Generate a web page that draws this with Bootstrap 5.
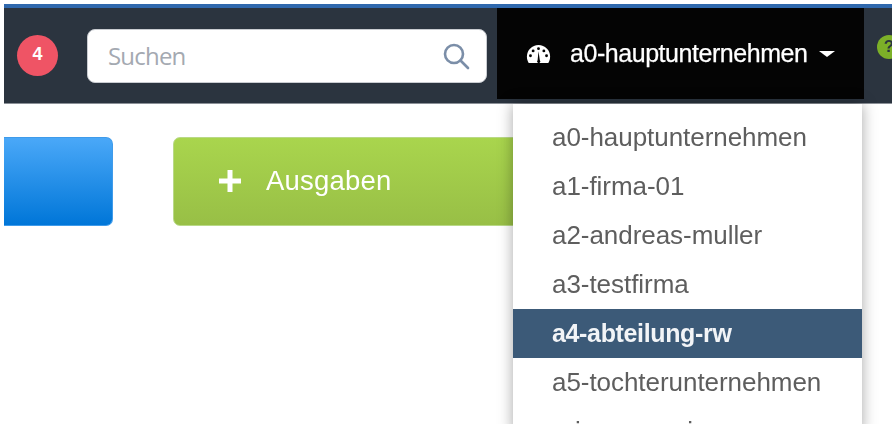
<!DOCTYPE html>
<html lang="de">
<head>
<meta charset="utf-8">
<title>Ausgaben</title>
<link href="https://cdn.jsdelivr.net/npm/bootstrap@5.3.0/dist/css/bootstrap.min.css" rel="stylesheet">
<style>
html, body { height: 428px; overflow: hidden; background: #fff; }
body { font-family: "Liberation Sans", Arial, sans-serif; }
.shot { margin: 4px 4px 4px 4px; height: 420px; overflow: hidden; position: relative; filter: blur(.55px); }
.top-rule { height: 4px; background: #2f68ad; }
.top-bar { height: 96px; background: #2b343f; border-bottom: 1px solid #8b9097; }
.alert-dot { flex: none; width: 41px; height: 41px; margin-left: 13px; padding-bottom: 3px; background: #ef5465; color: #fff; font-size: 18px; font-weight: 700; }
.find-box { flex: none; width: 400px; height: 54px; margin-left: 29px; padding: 0 16px 0 20px; background: #fff; border-radius: 8px; border: 1px solid #c9ccd1; }
.find-label { font-family: "Open Sans", sans-serif; font-size: 24px; letter-spacing: -.8px; color: #a4a9b1; }
.firm-toggle { flex: none; width: 367px; margin-left: 10px; height: 91px; align-self: flex-start; background: #040404; color: #fff; font-size: 25px; letter-spacing: -.45px; padding-left: 29px; -webkit-text-stroke: .25px #fff; }
.firm-label { margin-left: 19px; }
.firm-caret { width: 0; height: 0; margin-left: 12px; border-left: 8px solid transparent; border-right: 8px solid transparent; border-top: 6px solid #fff; }
.help-dot { width: 24px; height: 24px; margin-left: 13px; margin-top: -18px; background: #7cb028; color: #2b343f; font-size: 17px; font-weight: 700; flex: none; }
.action-row { margin-top: 33px; height: 89px; }
.tile-blue { width: 109px; border-radius: 0 7px 7px 0; background: linear-gradient(#4aa8f8, #0076d8); border: 1px solid #3f9bea; border-left: 0; }
.tile-green { width: 400px; margin-left: 60px; border-radius: 7px; background: linear-gradient(#a9d54d, #98bf46); border: 1px solid #b9d987; color: #fff; font-size: 27.5px; line-height: 1; padding-left: 44px; padding-bottom: 2px; letter-spacing: .2px; }
.tile-plus { margin-right: 24px; }
.firm-menu { position: absolute; left: 509px; top: 100px; width: 349px; height: 330px; margin: 0; padding: 0; border: 0; border-radius: 0; background: #fff; box-shadow: 0 0 14px rgba(0,0,0,.35); display: block; overflow: hidden; }
.firm-menu .firm-item { display: flex; align-items: center; height: 49px; padding: 0 0 0 39px; font-size: 26px; letter-spacing: -.05px; color: #5e5e5e; background: transparent; }
.firm-menu .firm-item.active { background: #3c5a78; color: #f2f4f7; font-weight: 700; font-size: 25px; letter-spacing: -.35px; }
.firm-menu li:first-child .firm-item { margin-top: 9px; }
</style>
</head>
<body>
<div class="shot">
  <div class="top-rule"></div>
  <nav class="top-bar d-flex align-items-center">
    <span class="alert-dot rounded-circle d-flex align-items-center justify-content-center">4</span>
    <div class="find-box d-flex align-items-center justify-content-between">
      <span class="find-label">Suchen</span>
      <svg width="28" height="28" viewBox="0 0 28 28" fill="none" stroke="#7b8ea8" stroke-width="2.6" aria-hidden="true"><circle cx="12" cy="12" r="9"/><path d="M18.500 18.500 26 26" stroke-linecap="round"/></svg>
    </div>
    <div class="firm-toggle d-flex align-items-center">
      <svg width="25" height="20" viewBox="0 0 28 22" aria-hidden="true"><path d="M14 1C6.800 1 1 6.800 1 14c0 2.600.8 5 2 7h22c1.200-2 2-4.400 2-7C27 6.800 21.200 1 14 1Z" fill="#fff"/><g fill="#040404"><circle cx="14" cy="5" r="1.600"/><circle cx="8" cy="7.500" r="1.600"/><circle cx="20" cy="7.500" r="1.600"/><circle cx="5" cy="13" r="1.600"/><circle cx="23" cy="13" r="1.600"/><path d="m13 18 1-10 1.500 10a1.800 1.800 0 1 1-2.500 0Z"/></g></svg>
      <span class="firm-label">a0-hauptunternehmen</span>
      <span class="firm-caret"></span>
    </div>
    <span class="help-dot rounded-circle d-flex align-items-center justify-content-center">?</span>
  </nav>
  <div class="action-row d-flex">
    <div class="tile-blue"></div>
    <div class="tile-green d-flex align-items-center">
      <svg class="tile-plus" width="24" height="24" viewBox="0 0 24 24" aria-hidden="true"><path d="M9.500 1h5v8.500H23v5h-8.500V23h-5v-8.500H1v-5h8.500Z" fill="#fff"/></svg>
      <span>Ausgaben</span>
    </div>
  </div>
  <ul class="dropdown-menu firm-menu list-unstyled">
    <li><a class="dropdown-item firm-item" href="#">a0-hauptunternehmen</a></li>
    <li><a class="dropdown-item firm-item" href="#">a1-firma-01</a></li>
    <li><a class="dropdown-item firm-item" href="#">a2-andreas-muller</a></li>
    <li><a class="dropdown-item firm-item" href="#">a3-testfirma</a></li>
    <li><a class="dropdown-item firm-item active" href="#">a4-abteilung-rw</a></li>
    <li><a class="dropdown-item firm-item" href="#">a5-tochterunternehmen</a></li>
    <li><a class="dropdown-item firm-item" href="#">a-immoservice</a></li>
  </ul>
</div>
<script src="https://cdn.jsdelivr.net/npm/bootstrap@5.3.0/dist/js/bootstrap.bundle.min.js"></script>
</body>
</html>
